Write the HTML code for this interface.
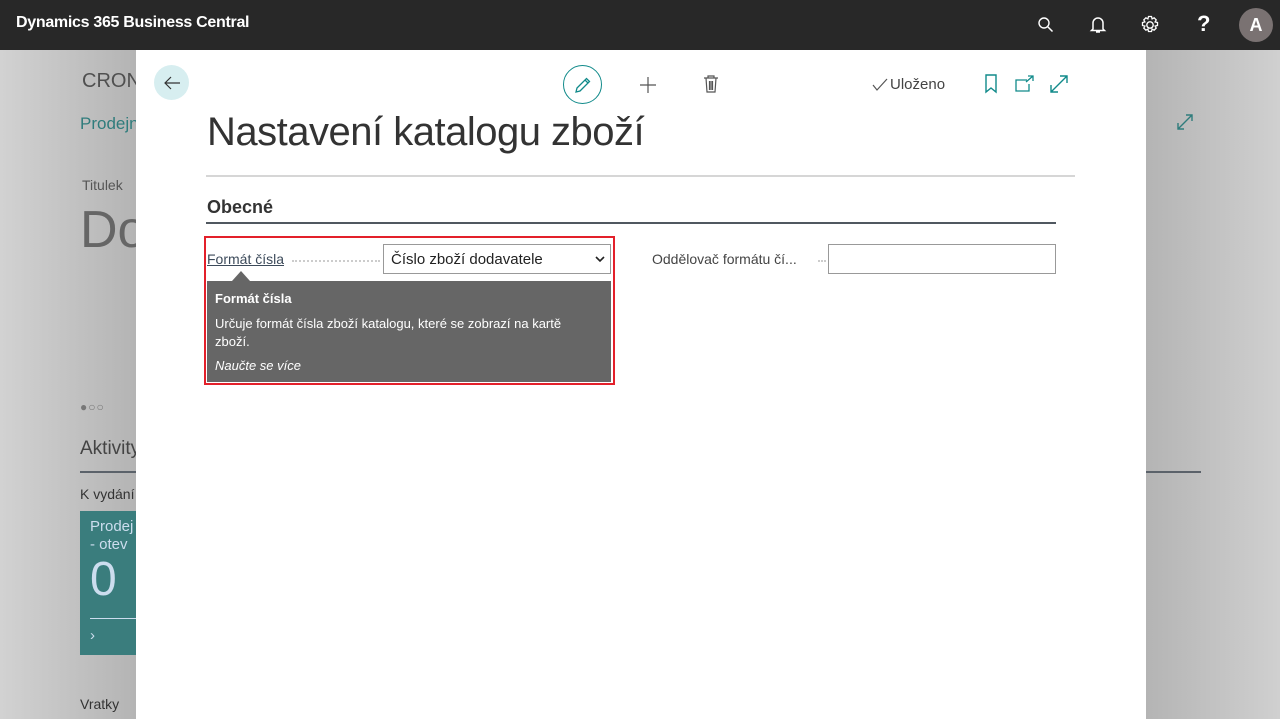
<!DOCTYPE html>
<html><head><meta charset="utf-8"><style>
*{box-sizing:border-box;margin:0;padding:0}
body{width:1280px;height:719px;overflow:hidden;position:relative;font-family:"Liberation Sans",sans-serif;background:linear-gradient(90deg,#d2d2d2 0%,#b4b4b4 136px,#b4b4b4 1146px,#d0d0d0 1280px)}
.top{position:absolute;left:0;top:0;width:1280px;height:50px;background:#282828;color:#fff}
.top .t{position:absolute;left:16px;top:14px;font-size:16px;font-weight:bold;letter-spacing:-0.3px}
.bg{position:absolute;color:#555}
.dlg{position:absolute;left:136px;top:50px;width:1010px;height:669px;background:#fff}
.ab{position:absolute}
</style></head><body>
<div class="top"><div class="t">Dynamics 365 Business Central</div>
<svg class="ab" style="left:1037px;top:16px" width="18" height="18" viewBox="0 0 18 18"><circle cx="7" cy="7" r="5" fill="none" stroke="#fff" stroke-width="1.4"/><path d="M11 11l4.5 4.5" stroke="#fff" stroke-width="1.5"/></svg>
<svg class="ab" style="left:1089px;top:15px" width="18" height="20" viewBox="0 0 18 20"><path d="M4 14V8a5 5 0 0110 0v6l1.5 1.5h-13z M7 17h4" fill="none" stroke="#fff" stroke-width="1.5"/></svg>
<svg class="ab" style="left:1140px;top:15px" width="20" height="20" viewBox="0 0 20 20"><circle cx="10" cy="10" r="3.2" fill="none" stroke="#fff" stroke-width="1.4"/><path d="M8.5 1.5h3l.6 2.4 2-1.1 2.1 2.1-1.1 2 2.4.6v3l-2.4.6 1.1 2-2.1 2.1-2-1.1-.6 2.4h-3l-.6-2.4-2 1.1-2.1-2.1 1.1-2-2.4-.6v-3l2.4-.6-1.1-2 2.1-2.1 2 1.1z" fill="none" stroke="#fff" stroke-width="1.3"/></svg>
<div class="ab" style="left:1197px;top:11px;font-size:22px;font-weight:bold">?</div>
<div class="ab" style="left:1239px;top:8px;width:34px;height:34px;border-radius:50%;background:#7a7272;color:#fff;font-weight:bold;font-size:18px;text-align:center;line-height:34px">A</div>
</div>
<div class="bg" style="left:82px;top:70px;font-size:20px;color:#505050">CRONUS</div>
<div class="bg" style="left:80px;top:114px;font-size:17px;color:#2f7c7c">Prodejní</div>
<div class="bg" style="left:82px;top:177px;font-size:14px;color:#555">Titulek</div>
<div class="bg" style="left:80px;top:200px;font-size:52px;color:#666;font-weight:300">Do</div>
<div class="bg" style="left:80px;top:400px;font-size:12px;color:#777;letter-spacing:1px">●○○</div>
<div class="bg" style="left:80px;top:438px;font-size:19px;color:#444">Aktivity</div>
<div class="ab" style="left:80px;top:471px;width:1121px;height:2px;background:#5b626a"></div>
<div class="bg" style="left:80px;top:486px;font-size:14px;color:#333">K vydání</div>
<div class="ab" style="left:80px;top:511px;width:60px;height:144px;background:#3a7d7d"></div>
<div class="bg" style="left:90px;top:518px;font-size:15px;color:#cde;line-height:18px">Prodej<br>- otev</div>
<div class="bg" style="left:90px;top:552px;font-size:48px;color:#cde;font-weight:300">0</div>
<div class="ab" style="left:90px;top:618px;width:50px;height:1px;background:#cde"></div>
<div class="bg" style="left:90px;top:627px;font-size:15px;color:#cde">›</div>
<div class="bg" style="left:80px;top:696px;font-size:14px;color:#333">Vratky</div>
<svg class="ab" style="left:1176px;top:113px" width="18" height="18" viewBox="0 0 18 18"><path d="M2 16L16 2M10 2h6v6M2 10v6h6" fill="none" stroke="#2f7c7c" stroke-width="1.4"/></svg>

<div class="dlg">
<div class="ab" style="left:18px;top:15px;width:35px;height:35px;border-radius:50%;background:#d7eef0"></div>
<svg class="ab" style="left:26px;top:23px" width="20" height="20" viewBox="0 0 20 20"><path d="M18 10H3M9 4l-6 6 6 6" fill="none" stroke="#333" stroke-width="1.2"/></svg>
<div class="ab" style="left:427px;top:15px;width:39px;height:39px;border-radius:50%;border:1.3px solid #108a8a"></div>
<svg class="ab" style="left:437px;top:25px" width="20" height="20" viewBox="0 0 20 20"><path d="M3 17l1-4L13.5 3.5l3 3L7 16z M12 5l3 3" fill="none" stroke="#108a8a" stroke-width="1.3"/></svg>
<svg class="ab" style="left:502px;top:25px" width="20" height="20" viewBox="0 0 20 20"><path d="M10 2v16M2 10h16" stroke="#555" stroke-width="1.2"/></svg>
<svg class="ab" style="left:566px;top:24px" width="18" height="20" viewBox="0 0 18 20"><path d="M2 4h14M6 4V2h6v2M4 4l1 14h8l1-14M7.5 7v9M9 7v9M10.5 7v9" fill="none" stroke="#555" stroke-width="1.2"/></svg>
<svg class="ab" style="left:736px;top:28px" width="16" height="14" viewBox="0 0 16 14"><path d="M1 7l4 5L15 1" fill="none" stroke="#555" stroke-width="1.2"/></svg>
<div class="ab" style="left:754px;top:26px;font-size:15px;color:#444">Uloženo</div>
<svg class="ab" style="left:848px;top:24px" width="14" height="20" viewBox="0 0 14 20"><path d="M2 1h10v17l-5-4-5 4z" fill="none" stroke="#108a8a" stroke-width="1.4"/></svg>
<svg class="ab" style="left:879px;top:25px" width="20" height="18" viewBox="0 0 20 18"><path d="M12 5H1v11h13V9M11 7l7-6M13 1h5v5" fill="none" stroke="#108a8a" stroke-width="1.3"/></svg>
<svg class="ab" style="left:913px;top:24px" width="20" height="20" viewBox="0 0 20 20"><path d="M2 18L18 2M11 2h7v7M2 11v7h7" fill="none" stroke="#108a8a" stroke-width="1.4"/></svg>
<div class="ab" style="left:71px;top:60px;font-size:40px;color:#333;font-weight:300;letter-spacing:-0.5px">Nastavení katalogu zboží</div>
<div class="ab" style="left:70px;top:125px;width:869px;height:2px;background:#d6d6d6"></div>
<div class="ab" style="left:71px;top:147px;font-size:18px;font-weight:bold;color:#333">Obecné</div>
<div class="ab" style="left:70px;top:172px;width:850px;height:2px;background:#505860"></div>
<div class="ab" style="left:68px;top:186px;width:411px;height:149px;border:2px solid #e3202a"></div>
<div class="ab" style="left:71px;top:201px;font-size:14px;color:#3c4a5a;text-decoration:underline">Formát čísla</div>
<div class="ab" style="left:156px;top:210px;width:88px;border-top:2px dotted #ccc"></div>
<div class="ab" style="left:247px;top:194px;width:228px;height:30px;border:1px solid #999;font-size:15px;color:#222;padding:6px 7px">Číslo zboží dodavatele</div>
<svg class="ab" style="left:458px;top:204px" width="12" height="10" viewBox="0 0 12 10"><path d="M2 3l4 4 4-4" fill="none" stroke="#222" stroke-width="1.6"/></svg>
<div class="ab" style="left:96px;top:221px;width:0;height:0;border-left:9px solid transparent;border-right:9px solid transparent;border-bottom:10px solid #666"></div>
<div class="ab" style="left:71px;top:231px;width:404px;height:101px;background:#666;color:#fff;padding:9px 8px;font-size:13px;line-height:18px">
<div style="font-weight:bold">Formát čísla</div>
<div style="margin-top:7px;width:370px">Určuje formát čísla zboží katalogu, které se zobrazí na kartě zboží.</div>
<div style="margin-top:6px;font-style:italic">Naučte se více</div></div>
<div class="ab" style="left:516px;top:201px;font-size:14px;color:#444">Oddělovač formátu čí...</div>
<div class="ab" style="left:682px;top:210px;width:8px;border-top:2px dotted #ccc"></div>
<div class="ab" style="left:692px;top:194px;width:228px;height:30px;border:1px solid #999"></div>
</div>
</body></html>
